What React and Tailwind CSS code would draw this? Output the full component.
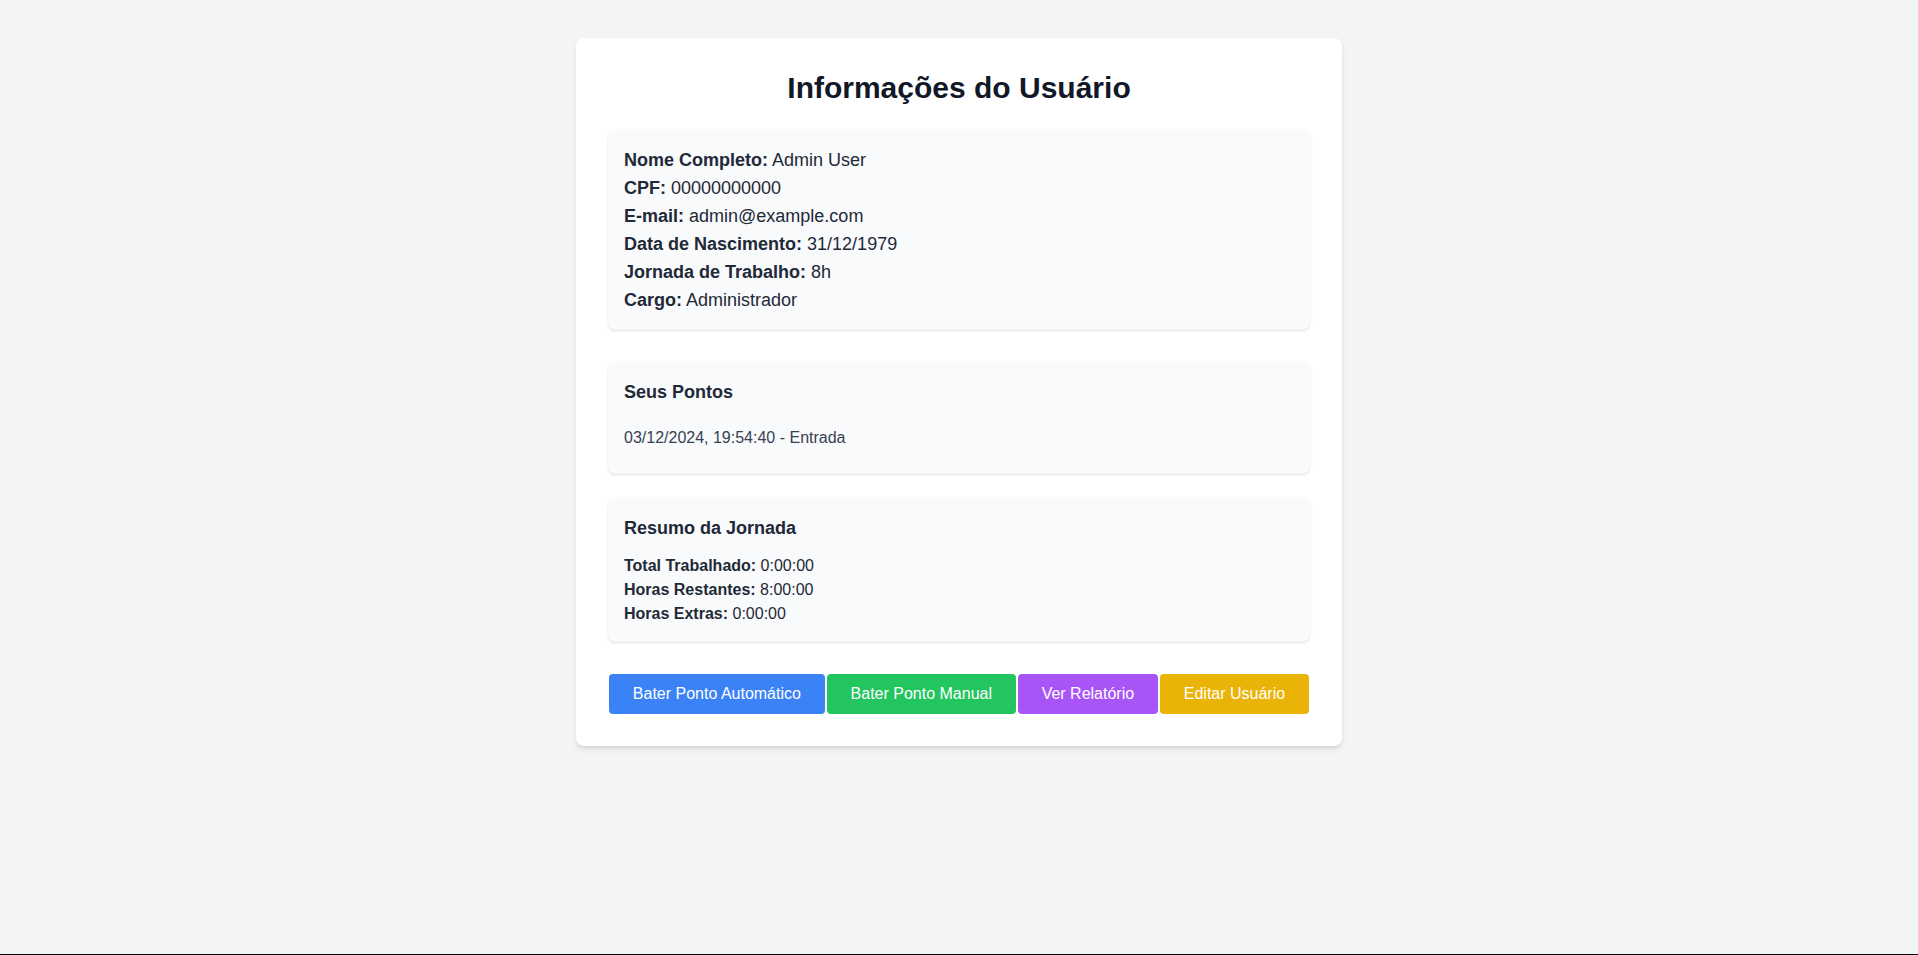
export default function App() {
  const info = [
    ["Nome Completo:", "Admin User"],
    ["CPF:", "00000000000"],
    ["E-mail:", "admin@example.com"],
    ["Data de Nascimento:", "31/12/1979"],
    ["Jornada de Trabalho:", "8h"],
    ["Cargo:", "Administrador"],
  ];
  const resumo = [
    ["Total Trabalhado:", "0:00:00"],
    ["Horas Restantes:", "8:00:00"],
    ["Horas Extras:", "0:00:00"],
  ];
  const boxShadow = "shadow-[0_1px_3px_0_rgba(0,0,0,0.1),0_1px_2px_-1px_rgba(0,0,0,0.1)]";
  return (
    <div className="h-screen bg-black" style={{ fontFamily: '"Liberation Sans", Arial, sans-serif' }}>
      <div className="h-[954px] bg-[#f3f4f6] pt-[38px]">
        <div className="mx-auto max-w-[766px] rounded-lg bg-white p-8 shadow-[0_4px_6px_-1px_rgba(0,0,0,0.1),0_2px_4px_-2px_rgba(0,0,0,0.1)]">
          <h1 className="mb-6 text-center text-3xl font-bold text-[#111827]">Informações do Usuário</h1>

          <div className={`mb-8 rounded-lg bg-[#f9fafb] p-4 text-lg text-[#1f2937] ${boxShadow}`}>
            {info.map(([k, v]) => (
              <p key={k}>
                <span className="font-bold">{k}</span> {v}
              </p>
            ))}
          </div>

          <div className={`mb-6 rounded-lg bg-[#f9fafb] p-4 ${boxShadow}`}>
            <h3 className="mb-3 text-lg font-bold text-[#1f2937]">Seus Pontos</h3>
            <ul>
              <li className="py-2 text-base text-[#374151]">03/12/2024, 19:54:40 - Entrada</li>
            </ul>
          </div>

          <div className={`rounded-lg bg-[#f9fafb] p-4 ${boxShadow}`}>
            <h3 className="mb-3 text-lg font-bold text-[#1f2937]">Resumo da Jornada</h3>
            {resumo.map(([k, v]) => (
              <p key={k} className="text-base text-[#1f2937]">
                <span className="font-bold">{k}</span> {v}
              </p>
            ))}
          </div>

          <div className="mt-8 flex justify-around">
            <button className="rounded bg-[#3b82f6] px-6 py-2 text-base text-white">Bater Ponto Automático</button>
            <button className="rounded bg-[#22c55e] px-6 py-2 text-base text-white">Bater Ponto Manual</button>
            <button className="rounded bg-[#a855f7] px-6 py-2 text-base text-white">Ver Relatório</button>
            <button className="rounded bg-[#eab308] px-6 py-2 text-base text-white">Editar Usuário</button>
          </div>
        </div>
      </div>
    </div>
  );
}
